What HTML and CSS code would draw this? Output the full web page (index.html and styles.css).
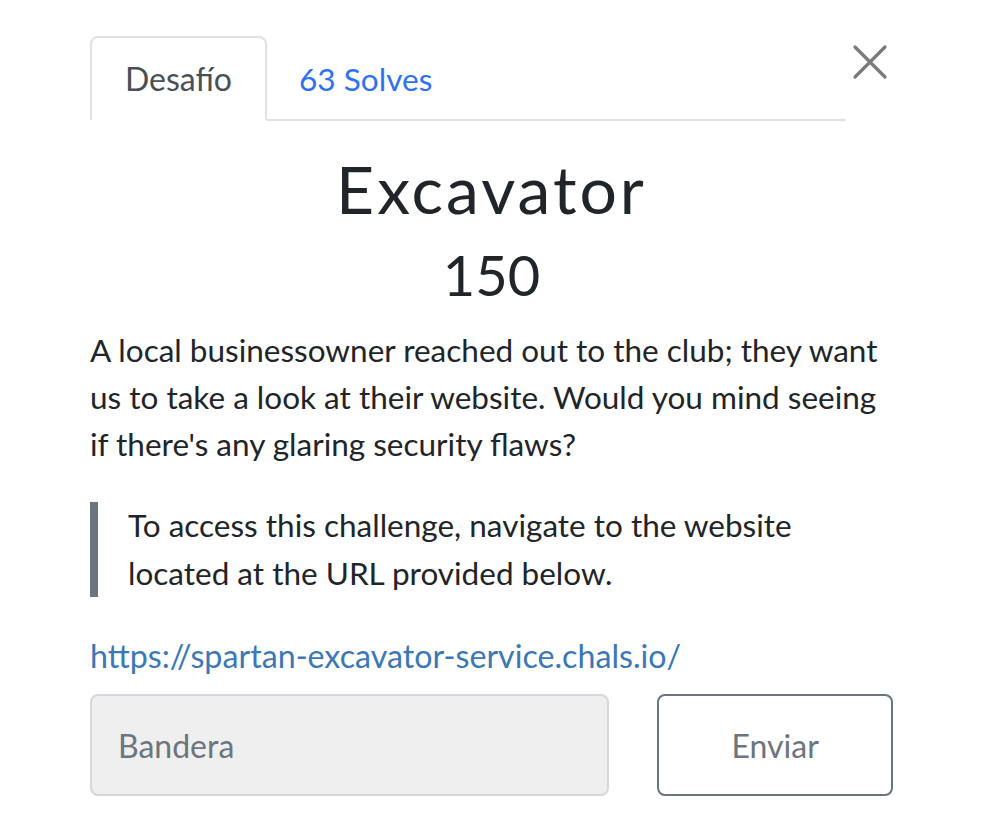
FILE: index.html
```html
<!DOCTYPE html>
<html lang="es">
<head>
<meta charset="utf-8">
<title>Excavator</title>
<link rel="stylesheet" href="styles.css">
</head>
<body>
<div class="modal">
  <div class="top-row">
    <ul class="tabs">
      <li class="tab active">Desafío</li>
      <li class="tab link">63 Solves</li>
    </ul>
    <button class="close" aria-label="Close">
      <svg width="36" height="36" viewBox="0 0 36 36"><path d="M3 3 L33 33 M33 3 L3 33" stroke="#7a7a7a" stroke-width="3.2" stroke-linecap="round" fill="none"/></svg>
    </button>
  </div>
  <h2 class="name">Excavator</h2>
  <h3 class="value">150</h3>
  <p class="desc">A local businessowner reached out to the club; they want us to take a look at their website. Would you mind seeing if there's any glaring security flaws?</p>
  <blockquote class="quote">To access this challenge, navigate to the website located at the URL provided below.</blockquote>
  <a class="url" href="#">https://spartan-excavator-service.chals.io/</a>
  <div class="submit-row">
    <input class="flag" type="text" placeholder="Bandera">
    <button class="submit">Enviar</button>
  </div>
</div>
</body>
</html>
```
FILE: styles.css
```css
html, body {
  margin: 0;
  padding: 0;
  background: #ffffff;
}
body {
  font-family: Lato, "Noto Sans", sans-serif;
  color: #212529;
}
.modal {
  width: 803px;
  padding: 36px 0 0 90px;
}
.top-row {
  display: flex;
  align-items: flex-start;
}
.tabs {
  list-style: none;
  margin: 0;
  padding: 0;
  display: flex;
  width: 756px;
  border-bottom: 2px solid #dee2e6;
}
.tab {
  font-size: 32px;
  line-height: 40px;
  padding: 21px 33px 20px 33px;
  margin-bottom: -2px;
  border: 2px solid transparent;
  border-radius: 8px 8px 0 0;
}
.tab.active {
  color: #495057;
  border-color: #dee2e6 #dee2e6 #ffffff;
  background: #fff;
}
.tab.link {
  color: #2f72f0;
  padding-left: 30px;
  font-size: 31.6px;
}
.close {
  margin: 8px 0 0 6px;
  padding: 0;
  border: 0;
  background: none;
  width: 36px;
  height: 36px;
  display: flex;
}
.name {
  margin: 28px 0 0 0;
  text-align: center;
  font-size: 66px;
  font-weight: 400;
  letter-spacing: 3px;
  line-height: 80px;
}
.value {
  margin: 10px 0 0 0;
  text-align: center;
  font-size: 56px;
  font-weight: 400;
  line-height: 72px;
}
.desc {
  margin: 16px 0 0 0;
  font-size: 31.5px;
  line-height: 47px;
}
.quote {
  margin: 34px 0 0 0;
  padding: 0 0 0 30px;
  border-left: 8px solid #6c757d;
  font-size: 31.5px;
  line-height: 47.5px;
}
.url {
  display: block;
  margin-top: 35px;
  font-size: 32.2px;
  line-height: 47px;
  color: #3b78b5;
  text-decoration: none;
}
.submit-row {
  display: flex;
  margin-top: 15px;
  gap: 48px;
}
.flag {
  width: 520px;
  height: 102px;
  box-sizing: border-box;
  background: #efefef;
  border: 2px solid #d4d8dc;
  border-radius: 8px;
  padding: 0 26px;
  font-family: Lato, sans-serif;
  font-size: 32px;
  color: #495057;
}
.flag::placeholder {
  color: #6c757d;
}
.submit {
  width: 236px;
  height: 102px;
  box-sizing: border-box;
  background: #fff;
  border: 2px solid #6c757d;
  border-radius: 8px;
  font-family: Lato, sans-serif;
  font-size: 32px;
  color: #6c757d;
}
```
